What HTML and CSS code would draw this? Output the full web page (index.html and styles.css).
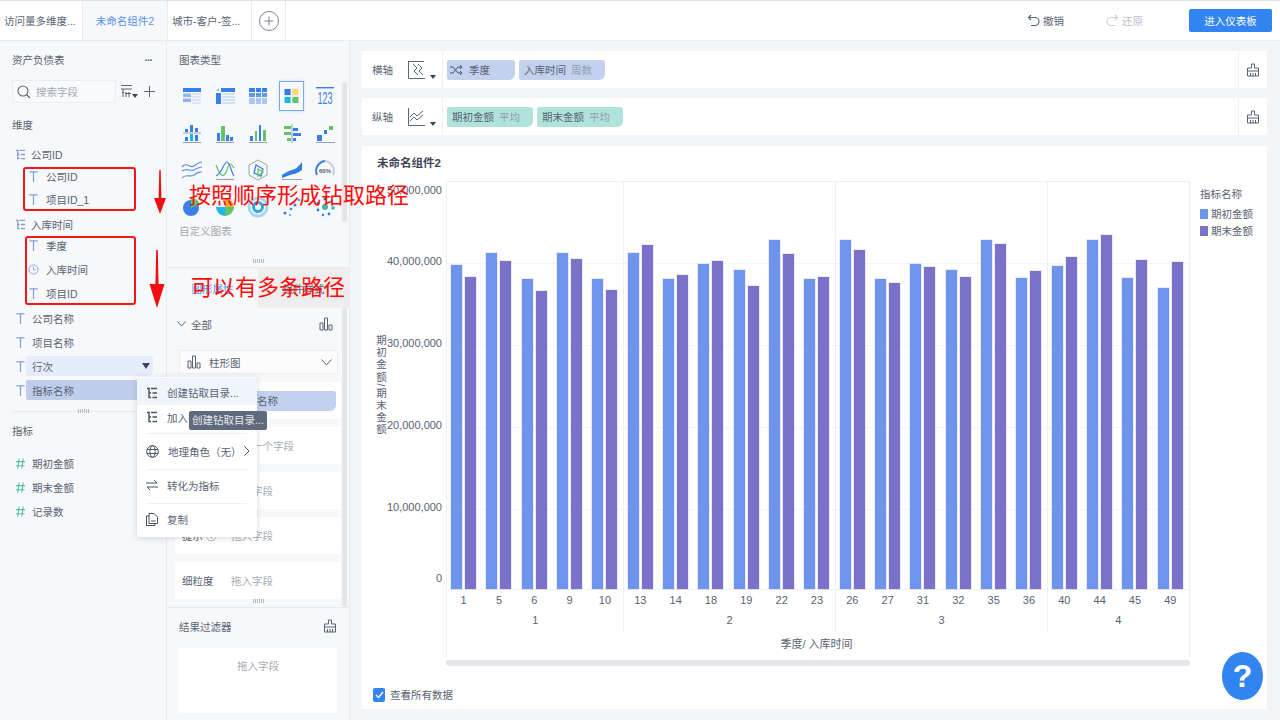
FILE: index.html
```html
<!DOCTYPE html>
<html lang="zh-CN">
<head>
  <meta charset="UTF-8">
  <title>未命名组件2</title>
  <link rel="stylesheet" href="styles.css">
</head>
<body>
<svg class="sprites" width="0" height="0">
  <symbol id="i-t" viewBox="0 0 12 14"><path d="M1.5 2H10.5M6 2V13" fill="none" stroke="currentColor" stroke-width="1.3"/></symbol>
  <symbol id="i-tree" viewBox="0 0 12 12"><path d="M1 1.5H4M3 1.5V10.5H5M3 6H5M5 1.5H11M6.5 6H11M6.5 10.5H11" fill="none" stroke="currentColor" stroke-width="1.4"/></symbol>
  <symbol id="i-hash" viewBox="0 0 12 14"><path d="M4.5 1.5L3 12.5M9 1.5L7.5 12.5M1 5H11M1 9.5H10.5" fill="none" stroke="currentColor" stroke-width="1.2"/></symbol>
  <symbol id="i-brush" viewBox="0 0 14 14"><path d="M5.5 1H8.5V5H12.5V13H1.5V5H5.5ZM1.5 8H12.5M4.5 10V13M7 10V13M9.5 10V13" fill="none" stroke="currentColor" stroke-width="1"/></symbol>
  <symbol id="i-bars" viewBox="0 0 14 14"><path d="M1 6H4V13H1ZM5.5 1H8.5V13H5.5ZM10 8H13V13H10Z" fill="none" stroke="currentColor" stroke-width="1"/></symbol>
</svg>

<div class="app">
  <header class="topbar">
    <nav class="tabs">
      <div class="tab tab-first">访问量多维度...</div>
      <div class="tab tab-active">未命名组件2</div>
      <div class="tab tab-third">城市-客户-签...</div>
      <div class="tab tab-add">
        <svg width="20" height="20" viewBox="0 0 20 20"><circle cx="10" cy="10" r="9.5" fill="none" stroke="#7b8494"/><path d="M10 5.5V14.5M5.5 10H14.5" stroke="#7b8494"/></svg>
      </div>
    </nav>
    <div class="actions">
      <span class="action">
        <svg width="13" height="13" viewBox="0 0 13 13"><path d="M4 1L1.5 3.5L4 6M1.5 3.5H8A3.7 3.7 0 0 1 8 11.5H4" fill="none" stroke="#5b6575" stroke-width="1.1"/></svg>
        撤销
      </span>
      <span class="action action-off">
        <svg width="13" height="13" viewBox="0 0 13 13"><path d="M9 1L11.5 3.5L9 6M11.5 3.5H5A3.7 3.7 0 0 0 5 11.5H9" fill="none" stroke="#ccd0d6" stroke-width="1.1"/></svg>
        还原
      </span>
      <button class="enter-btn">进入仪表板</button>
    </div>
  </header>

  <div class="workspace">
    <aside class="fields">
      <div class="fields-head">
        <span>资产负债表</span>
        <span class="more">···</span>
      </div>
      <div class="search-row">
        <div class="search">
          <svg width="14" height="14" viewBox="0 0 14 14"><circle cx="6" cy="6" r="5" fill="none" stroke="#5b6575" stroke-width="1.1"/><path d="M9.5 9.5L13 13" stroke="#5b6575" stroke-width="1.1"/></svg>
          <span>搜索字段</span>
        </div>
        <svg width="17" height="15" viewBox="0 0 17 15"><path d="M0 1.5H11M0 5H11M1 8.5H3M2 5V13M5 8V13M8 8V13M4 9.5H10" fill="none" stroke="#5b6575"/><path d="M11 10H17L14 14Z" fill="#3d4654"/></svg>
        <svg class="plus" width="11" height="11" viewBox="0 0 11 11"><path d="M5.5 0V11M0 5.5H11" stroke="#5b6575"/></svg>
      </div>

      <h3 class="group-title dim-title">维度</h3>
      <div class="field-list">
        <div class="row"><svg class="ic ic-tree"><use href="#i-tree"/></svg><span class="label">公司ID</span></div>
        <div class="sub sub-first">
          <div class="row row-s"><svg class="ic ic-t"><use href="#i-t"/></svg><span class="label">公司ID</span></div>
          <div class="row row-s"><svg class="ic ic-t"><use href="#i-t"/></svg><span class="label">项目ID_1</span></div>
        </div>
        <div class="row row-next"><svg class="ic ic-tree"><use href="#i-tree"/></svg><span class="label">入库时间</span></div>
        <div class="sub sub-second">
          <div class="row"><svg class="ic ic-t"><use href="#i-t"/></svg><span class="label">季度</span></div>
          <div class="row">
            <svg class="ic ic-t" viewBox="0 0 12 12"><circle cx="6" cy="6" r="5" fill="none" stroke="currentColor"/><path d="M6 3V6.5H8.5" fill="none" stroke="currentColor"/></svg>
            <span class="label">入库时间</span>
          </div>
          <div class="row"><svg class="ic ic-t"><use href="#i-t"/></svg><span class="label">项目ID</span></div>
        </div>
        <div class="row row-next"><svg class="ic ic-t"><use href="#i-t"/></svg><span class="label">公司名称</span></div>
        <div class="row"><svg class="ic ic-t"><use href="#i-t"/></svg><span class="label">项目名称</span></div>
        <div class="row"><svg class="ic ic-t"><use href="#i-t"/></svg><span class="label pill pill-hover">行次<i class="caret"></i></span></div>
        <div class="row"><svg class="ic ic-t"><use href="#i-t"/></svg><span class="label pill pill-on">指标名称</span></div>
      </div>

      <div class="handle-line"><span class="handle"></span></div>

      <h3 class="group-title">指标</h3>
      <div class="field-list measure-list">
        <div class="row"><svg class="ic ic-hash"><use href="#i-hash"/></svg><span class="label">期初金额</span></div>
        <div class="row"><svg class="ic ic-hash"><use href="#i-hash"/></svg><span class="label">期末金额</span></div>
        <div class="row"><svg class="ic ic-hash"><use href="#i-hash"/></svg><span class="label">记录数</span></div>
      </div>
    </aside>

    <section class="config">
      <div class="types">
        <h3 class="group-title">图表类型</h3>
        <div class="type-grid">
          <div class="type"><svg viewBox="0 0 24 24"><rect x="3" y="4" width="18" height="4" fill="#3a7fe8"/><path d="M3 9.5H11V13H3ZM3 14.5H11V18H3Z" fill="#8db5f2"/><path d="M12 10H21M12 13H21M12 16H21M12 19H21" stroke="#bcd3f7"/></svg></div>
          <div class="type"><svg viewBox="0 0 24 24"><rect x="8" y="4" width="14" height="4" fill="#3a7fe8"/><rect x="3" y="9" width="5" height="11" fill="#3a7fe8"/><path d="M3 7L6 4V7Z" fill="#8db5f2"/><path d="M9 10H22M9 13H22M9 16H22M9 19H22" stroke="#a9c8f5"/></svg></div>
          <div class="type"><svg viewBox="0 0 24 24"><path d="M3 4H9V8H3ZM10 4H15V8H10ZM16 4H21V8H16Z" fill="#3a7fe8"/><path d="M3 9H9V13H3ZM10 9H15V13H10ZM16 9H21V13H16Z" fill="#5f97ec"/><path d="M3 14H9V20H3ZM10 14H15V20H10ZM16 14H21V20H16Z" fill="#a9c8f5"/></svg></div>
          <div class="type type-on"><svg viewBox="0 0 24 24"><rect x="4" y="4" width="7" height="7" fill="#2f7de1"/><rect x="13" y="4" width="7" height="7" fill="#f7d774"/><rect x="4" y="13" width="7" height="7" fill="#1eb6e8"/><rect x="13" y="13" width="7" height="7" fill="#62c36a"/></svg></div>
          <div class="type"><svg viewBox="0 0 24 24"><rect x="3" y="3" width="18" height="1.4" fill="#3a7fe8"/><text x="12" y="20" text-anchor="middle" textLength="15" lengthAdjust="spacingAndGlyphs" class="type-num">123</text></svg></div>

          <div class="type"><svg viewBox="0 0 24 24"><path d="M5 8H8V11H5ZM10 4H13V11H10ZM15 7H18V11H15ZM5 16H8V20H5ZM15 14H18V20H15Z" fill="#3a7fe8"/><path d="M10 13H13V20H10Z" fill="#1eb6e8"/><path d="M3 12H21M3 21.5H21" stroke="#9aa3b0"/></svg></div>
          <div class="type"><svg viewBox="0 0 24 24"><path d="M4 12H7V20H4ZM13 14H16V20H13Z" fill="#3a7fe8"/><path d="M8 5H12V20H8Z" fill="#62c36a"/><path d="M17 16H20V20H17Z" fill="#3a7fe8"/><path d="M3 21.5H21" stroke="#9aa3b0"/></svg></div>
          <div class="type"><svg viewBox="0 0 24 24"><path d="M4 15H7V20H4ZM13 8H15V20H13Z" fill="#3a7fe8"/><path d="M9 10H11V20H9ZM17 9H20V20H17Z" fill="#62c36a"/><path d="M13 4H15V20H13Z" fill="#3a7fe8"/><path d="M3 21.5H21" stroke="#9aa3b0"/></svg></div>
          <div class="type"><svg viewBox="0 0 24 24"><path d="M4 5H11V8H4ZM4 11H11V14H4ZM7 17H11V20H7Z" fill="#62c36a"/><path d="M13 7H18V10H13ZM13 12H21V15H13ZM13 17H16V20H13Z" fill="#3a7fe8"/><path d="M12 3V22" stroke="#9aa3b0"/></svg></div>
          <div class="type"><svg viewBox="0 0 24 24"><path d="M4 14H9V20H4ZM11 9H14V13H11Z" fill="#3a7fe8"/><path d="M16 5H20V9H16Z" fill="#62c36a"/><path d="M3 21.5H22" stroke="#9aa3b0"/></svg></div>

          <div class="type"><svg viewBox="0 0 24 24" fill="none" stroke="#5b8fe0" stroke-width="1.2"><path d="M2 9C7 3 10 11 14 8S19 4 22 4M2 13C7 9 10 14 14 12S19 9 22 9M2 20C6 15 10 20 14 17S19 14 22 14"/></svg></div>
          <div class="type"><svg viewBox="0 0 24 24" fill="none" stroke-width="1.2"><path d="M3 7C8 20 11 20 14 12S17 4 21 10" stroke="#62c36a"/><path d="M3 18C9 15 11 4 14 4S18 14 21 18" stroke="#3a7fe8"/><path d="M3 21.5H21" stroke="#9aa3b0"/></svg></div>
          <div class="type"><svg viewBox="0 0 24 24" fill="none"><path d="M12 2L21 7V17L12 22L3 17V7Z" stroke="#9aa3b0"/><path d="M10 7L17 11L15 18L8 15Z" stroke="#3a7fe8" stroke-width="1.3"/><path d="M12 11L17 14L12 18Z" stroke="#62c36a" stroke-width="1.3"/></svg></div>
          <div class="type"><svg viewBox="0 0 24 24"><path d="M2 17C8 13 9 13 12 12S17 11 22 4V12C17 16 13 16 10 17S5 19 2 20Z" fill="#2f7de1"/><path d="M2 21.5H22" stroke="#9aa3b0"/></svg></div>
          <div class="type"><svg viewBox="0 0 24 24" fill="none"><path d="M4 17A10 10 0 0 1 12 3" stroke="#3a7fe8" stroke-width="2"/><path d="M12 3A10 10 0 0 1 20 17" stroke="#c6d2e2" stroke-width="2"/><text x="12" y="15" text-anchor="middle" class="type-gauge">60%</text></svg></div>

          <div class="type"><svg viewBox="0 0 24 24"><circle cx="11" cy="13" r="8" fill="#3a7fe8"/><path d="M11 13V3A10 10 0 0 1 20 9Z" fill="#62c36a"/></svg></div>
          <div class="type"><svg viewBox="0 0 24 24"><path d="M12 12V3A9 9 0 0 1 21 12Z" fill="#f2a93b"/><path d="M12 12H21A9 9 0 0 1 12 21Z" fill="#62c36a"/><path d="M12 12V21A9 9 0 0 1 3 12Z" fill="#1eb6e8"/><path d="M12 12H3A9 9 0 0 1 12 3Z" fill="#e9ecf2"/></svg></div>
          <div class="type"><svg viewBox="0 0 24 24" fill="none"><circle cx="12" cy="12" r="9" stroke="#a6d8f2" stroke-width="3"/><circle cx="12" cy="12" r="4.5" stroke="#2fa8e0" stroke-width="3"/></svg></div>
          <div class="type"><svg viewBox="0 0 24 24" fill="#3a7fe8"><circle cx="5" cy="18" r="1.6"/><circle cx="11" cy="14" r="1.3"/><circle cx="15" cy="10" r="1.6"/><circle cx="19" cy="5" r="1.3" fill="#1eb6e8"/><circle cx="10" cy="20" r="1" fill="#1eb6e8"/></svg></div>
          <div class="type"><svg viewBox="0 0 24 24" fill="#2f7de1"><circle cx="12" cy="4" r="1.6"/><circle cx="18" cy="7" r="1.4" fill="#1eb6e8"/><circle cx="20" cy="13" r="1.8" fill="#3fb6a8"/><circle cx="16" cy="19" r="1.4"/><circle cx="10" cy="20" r="1.2"/><circle cx="5" cy="15" r="1.4"/><circle cx="5" cy="8" r="1.2"/><circle cx="12" cy="12" r="3" fill="#3fb6a8"/></svg></div>
        </div>
        <div class="custom">自定义图表</div>
        <span class="handle handle-types"></span>
        <span class="thumb thumb-types"></span>
      </div>

      <div class="props">
        <div class="prop-tabs">
          <div class="prop-tab prop-tab-on">图形属性</div>
          <div class="prop-tab">组件样式</div>
        </div>
        <div class="all-row">
          <svg width="9" height="6" viewBox="0 0 9 6"><path d="M.5 .5L4.5 5L8.5 .5" fill="none" stroke="#5b6575"/></svg>
          <span>全部</span>
          <svg class="ic-end" width="14" height="14"><use href="#i-bars"/></svg>
        </div>
        <div class="select">
          <svg width="14" height="14"><use href="#i-bars"/></svg>
          <span>柱形图</span>
          <svg class="ic-end" width="11" height="7" viewBox="0 0 11 7"><path d="M.5 .5L5.5 6L10.5 .5" fill="none" stroke="#5b6575"/></svg>
        </div>
        <div class="prop-rows">
          <div class="prop-row"><span class="prop-name">颜色</span><span class="prop-chip">指标名称</span></div>
          <div class="prop-row"><span class="prop-name">大小</span><span class="prop-drop">拖入一个字段</span></div>
          <div class="prop-row"><span class="prop-name">标签</span><span class="prop-drop">拖入字段</span></div>
          <div class="prop-row"><span class="prop-name">提示 ⓘ</span><span class="prop-drop">拖入字段</span></div>
          <div class="prop-row"><span class="prop-name">细粒度</span><span class="prop-drop">拖入字段</span></div>
        </div>
        <span class="handle handle-props"></span>
        <span class="thumb thumb-props"></span>
      </div>

      <div class="result-filter">
        <div class="filter-head">
          <span>结果过滤器</span>
          <svg width="14" height="14"><use href="#i-brush"/></svg>
        </div>
        <div class="filter-drop">拖入字段</div>
      </div>
    </section>

    <main class="stage">
      <div class="shelf">
        <span class="shelf-name">横轴</span>
        <span class="shelf-kind">
          <svg width="17" height="18" viewBox="0 0 17 18" fill="none" stroke="#5b6575"><path d="M.5 0V17.5H17M.5 .5H16"/><path d="M5 3L9 7L6 10L10 14M10 3L14 7L11 10L15 14"/></svg>
          <i class="caret caret-small"></i>
        </span>
        <div class="chips">
          <span class="chip chip-dim chip-q">
            <svg width="12" height="10" viewBox="0 0 12 10" fill="none" stroke="#4a5464"><path d="M0 2H3L8 8H12M0 8H3L8 2H12M10 0L12 2L10 4M10 6L12 8L10 10"/></svg>
            季度
          </span>
          <span class="chip chip-dim">入库时间<em>周数</em></span>
        </div>
        <span class="shelf-end"><svg width="14" height="14"><use href="#i-brush"/></svg></span>
      </div>
      <div class="shelf">
        <span class="shelf-name">纵轴</span>
        <span class="shelf-kind">
          <svg width="17" height="18" viewBox="0 0 17 18" fill="none" stroke="#5b6575"><path d="M.5 0V17.5H17"/><path d="M2 9L6 5L9 8L15 3M2 13L6 9L9 12L15 7"/></svg>
          <i class="caret caret-small"></i>
        </span>
        <div class="chips">
          <span class="chip chip-mea">期初金额<em>平均</em></span>
          <span class="chip chip-mea">期末金额<em>平均</em></span>
        </div>
        <span class="shelf-end"><svg width="14" height="14"><use href="#i-brush"/></svg></span>
      </div>

      <div class="chart-card">
        <h2 class="chart-title">未命名组件2</h2>
        <div class="chart-body">
          <div class="y-title">期初金额/期末金额</div>
          <div class="y-ticks">
            <span class="tick">50,000,000</span>
            <span class="tick tick-edge">40,000,000</span>
            <span class="tick">30,000,000</span>
            <span class="tick">20,000,000</span>
            <span class="tick">10,000,000</span>
            <span class="tick tick-edge">0</span>
          </div>
          <div class="plot-wrap">
            <div class="plot">
              <div class="quarters">
                <div class="quarter q5">
                  <div class="bars">
                    <div class="pair"><i class="bar a" style="height:324px"></i><i class="bar b" style="height:312px"></i></div>
                    <div class="pair"><i class="bar a" style="height:336px"></i><i class="bar b" style="height:328px"></i></div>
                    <div class="pair"><i class="bar a" style="height:310px"></i><i class="bar b" style="height:298px"></i></div>
                    <div class="pair"><i class="bar a" style="height:336px"></i><i class="bar b" style="height:330px"></i></div>
                    <div class="pair"><i class="bar a" style="height:310px"></i><i class="bar b" style="height:299px"></i></div>
                  </div>
                  <div class="weeks"><span>1</span><span>5</span><span>6</span><span>9</span><span>10</span></div>
                  <div class="q-name">1</div>
                </div>
                <div class="quarter q6">
                  <div class="bars">
                    <div class="pair"><i class="bar a" style="height:336px"></i><i class="bar b" style="height:344px"></i></div>
                    <div class="pair"><i class="bar a" style="height:310px"></i><i class="bar b" style="height:314px"></i></div>
                    <div class="pair"><i class="bar a" style="height:325px"></i><i class="bar b" style="height:328px"></i></div>
                    <div class="pair"><i class="bar a" style="height:319px"></i><i class="bar b" style="height:303px"></i></div>
                    <div class="pair"><i class="bar a" style="height:349px"></i><i class="bar b" style="height:335px"></i></div>
                    <div class="pair"><i class="bar a" style="height:310px"></i><i class="bar b" style="height:312px"></i></div>
                  </div>
                  <div class="weeks"><span>13</span><span>14</span><span>18</span><span>19</span><span>22</span><span>23</span></div>
                  <div class="q-name">2</div>
                </div>
                <div class="quarter q6">
                  <div class="bars">
                    <div class="pair"><i class="bar a" style="height:349px"></i><i class="bar b" style="height:339px"></i></div>
                    <div class="pair"><i class="bar a" style="height:310px"></i><i class="bar b" style="height:306px"></i></div>
                    <div class="pair"><i class="bar a" style="height:325px"></i><i class="bar b" style="height:322px"></i></div>
                    <div class="pair"><i class="bar a" style="height:319px"></i><i class="bar b" style="height:312px"></i></div>
                    <div class="pair"><i class="bar a" style="height:349px"></i><i class="bar b" style="height:345px"></i></div>
                    <div class="pair"><i class="bar a" style="height:311px"></i><i class="bar b" style="height:318px"></i></div>
                  </div>
                  <div class="weeks"><span>26</span><span>27</span><span>31</span><span>32</span><span>35</span><span>36</span></div>
                  <div class="q-name">3</div>
                </div>
                <div class="quarter q4">
                  <div class="bars">
                    <div class="pair"><i class="bar a" style="height:323px"></i><i class="bar b" style="height:332px"></i></div>
                    <div class="pair"><i class="bar a" style="height:349px"></i><i class="bar b" style="height:354px"></i></div>
                    <div class="pair"><i class="bar a" style="height:311px"></i><i class="bar b" style="height:329px"></i></div>
                    <div class="pair"><i class="bar a" style="height:301px"></i><i class="bar b" style="height:327px"></i></div>
                  </div>
                  <div class="weeks"><span>40</span><span>44</span><span>45</span><span>49</span></div>
                  <div class="q-name">4</div>
                </div>
              </div>
              <div class="x-title">季度/ 入库时间</div>
            </div>
            <div class="h-scroll"></div>
          </div>
          <div class="legend">
            <div class="legend-title">指标名称</div>
            <div class="legend-item"><i class="swatch a"></i>期初金额</div>
            <div class="legend-item"><i class="swatch b"></i>期末金额</div>
          </div>
        </div>
        <label class="see-all">
          <span class="check"><svg width="9" height="8" viewBox="0 0 9 8"><path d="M1 4L3.5 6.5L8 1" fill="none" stroke="#fff" stroke-width="1.4"/></svg></span>
          查看所有数据
        </label>
      </div>
    </main>
  </div>

  <!-- context menu for the field -->
  <div class="menu">
    <div class="menu-item menu-item-on">
      <svg width="12" height="12"><use href="#i-tree"/></svg><span>创建钻取目录...</span>
    </div>
    <div class="menu-item menu-item-short">
      <svg width="12" height="12"><use href="#i-tree"/></svg><span>加入钻取目录</span>
    </div>
    <div class="menu-sep menu-sep-first"></div>
    <div class="menu-item">
      <svg width="13" height="13" viewBox="0 0 13 13" fill="none" stroke="currentColor"><circle cx="6.5" cy="6.5" r="5.8"/><ellipse cx="6.5" cy="6.5" rx="2.6" ry="5.8"/><path d="M1 4.5H12M1 8.5H12"/></svg>
      <span>地理角色（无）</span>
      <svg class="ic-end" width="6" height="10" viewBox="0 0 6 10"><path d="M.5 .5L5 5L.5 9.5" fill="none" stroke="currentColor"/></svg>
    </div>
    <div class="menu-sep"></div>
    <div class="menu-item">
      <svg width="12" height="12" viewBox="0 0 12 12" fill="none" stroke="currentColor"><path d="M0 4H11L8 1M12 8H1L4 11"/></svg>
      <span>转化为指标</span>
    </div>
    <div class="menu-sep"></div>
    <div class="menu-item">
      <svg width="12" height="13" viewBox="0 0 12 13" fill="none" stroke="currentColor"><path d="M3 .5H8L11.5 4V10.5H3ZM3 3H.5V12.5H9V10.5M5 8H9.5"/></svg>
      <span>复制</span>
    </div>
  </div>
  <div class="tooltip">创建钻取目录...</div>

  <!-- annotations drawn on top of the screenshot -->
  <span class="mark mark-a"></span>
  <span class="mark mark-b"></span>
  <svg class="arrow arrow-a" width="14" height="44" viewBox="0 0 14 44"><path d="M6.3 0H7.7L8.4 28H13L7 44L1 28H5.6Z" fill="#f01010"/></svg>
  <svg class="arrow arrow-b" width="16" height="58" viewBox="0 0 16 58"><path d="M7.2 0H8.8L9.6 34H15.5L8 58L.5 34H6.4Z" fill="#f01010"/></svg>
  <div class="note note-a">按照顺序形成钻取路径</div>
  <div class="note note-b">可以有多条路径</div>

  <button class="help">?</button>
</div>
</body>
</html>
```

FILE: styles.css
```css
:root {
  --text: #596373;
  --muted: #a4abb6;
  --line: #e9ebef;
  --panel: #f7f8fa;
  --blue: #3285f0;
  --bar-a: #6f94ec;
  --bar-b: #7a72c8;
}

* {
  box-sizing: border-box;
}

html, body {
  margin: 0;
  height: 100%;
  overflow: hidden;
}

body {
  font-family: "Liberation Sans", "Noto Sans CJK SC", sans-serif;
  font-size: 10.5px;
  color: var(--text);
  background: #fff;
}

.sprites {
  position: absolute;
}

h2, h3 {
  margin: 0;
  font-size: inherit;
  font-weight: normal;
}

.app {
  position: relative;
  display: flex;
  flex-direction: column;
  width: 1280px;
  height: 720px;
}

/* top bar */
.topbar {
  display: flex;
  justify-content: space-between;
  height: 41px;
  border-top: 1px solid #e2e2e2;
  border-bottom: 1px solid var(--line);
  flex: none;
}

.tabs {
  display: flex;
}

.tab {
  display: flex;
  align-items: center;
  border-right: 1px solid var(--line);
  white-space: nowrap;
}

.tab-first {
  width: 83px;
  padding-left: 4px;
}

.tab-active {
  width: 85px;
  justify-content: center;
  color: #5b92e8;
  background: var(--panel);
}

.tab-third {
  width: 84px;
  padding-left: 4px;
}

.tab-add {
  width: 34px;
  justify-content: center;
}

.actions {
  display: flex;
  align-items: center;
  padding-right: 8px;
}

.action {
  display: flex;
  align-items: center;
  gap: 3px;
  margin-right: 42px;
}

.action-off {
  margin-right: 46px;
  color: #b9bec6;
}

.enter-btn {
  width: 83px;
  height: 23px;
  padding: 0;
  border: none;
  border-radius: 2px;
  background: var(--blue);
  color: #fff;
  font: inherit;
}

.workspace {
  display: flex;
  flex: 1;
  min-height: 0;
}

/* field list */
.fields {
  width: 167px;
  flex: none;
  padding: 11px 0 0 12px;
  background: var(--panel);
  border-right: 1px solid var(--line);
}

.fields-head {
  display: flex;
  justify-content: space-between;
  height: 16px;
  line-height: 16px;
  padding-right: 14px;
}

.more {
  font-weight: bold;
  letter-spacing: -1px;
}

.search-row {
  display: flex;
  align-items: center;
  margin-top: 12px;
}

.search {
  display: flex;
  align-items: center;
  gap: 5px;
  width: 104px;
  height: 23px;
  margin-right: 5px;
  padding-left: 4px;
  border: 1px solid #eceef1;
  color: var(--muted);
  background: #f9fafb;
}

.plus {
  margin-left: 6px;
}

.group-title {
  height: 16px;
  line-height: 16px;
}

.dim-title {
  margin-top: 14px;
}

.field-list {
  margin: 9px 0 0 -12px;
}

.row {
  display: flex;
  align-items: center;
  height: 24px;
  padding-left: 15px;
}

.row-s {
  height: 23px;
}

.row-next {
  margin-top: 1px;
}

.sub .row {
  padding-left: 28px;
}

.sub-first {
  margin-top: -1px;
}

.sub-second {
  margin-top: -3px;
}

.ic {
  flex: none;
  width: 11px;
  height: 13px;
}

.ic-t {
  color: #7f9fe0;
}

.ic-tree {
  color: #8a9bc9;
}

.ic-hash {
  color: #57bdb0;
}

.row .label {
  margin-left: 6px;
}

.row .ic-tree + .label {
  margin-left: 5px;
}

.sub .row .label {
  margin-left: 7px;
}

.row .pill {
  position: relative;
  display: flex;
  align-items: center;
  width: 127px;
  height: 20px;
  margin-left: 0;
  padding-left: 6px;
  border-radius: 2px 3px 6px 2px;
}

.pill-hover {
  background: #e5edfa;
}

.pill-on {
  background: #bfcfeb;
}

.caret {
  position: absolute;
  right: 3px;
  top: 7px;
  border-left: 4px solid transparent;
  border-right: 4px solid transparent;
  border-top: 6px solid #3d4654;
}

.handle-line {
  position: relative;
  height: 1px;
  margin: 9px 1px 0 0;
  background: var(--line);
}

.handle {
  position: absolute;
  width: 11px;
  height: 4px;
  background: repeating-linear-gradient(90deg, #b4bac4 0 1px, transparent 1px 2px);
}

.handle-line .handle {
  left: 66px;
  top: -2px;
}

.handle-line + .group-title {
  margin-top: 11px;
}

.measure-list {
  margin-top: 12px;
}

/* middle panel */
.config {
  display: flex;
  flex-direction: column;
  width: 183px;
  flex: none;
  background: var(--panel);
  border-right: 1px solid var(--line);
}

.types {
  position: relative;
  height: 227px;
  flex: none;
  padding: 11px 0 0 12px;
  border-bottom: 1px solid var(--line);
}

.type-grid {
  display: grid;
  grid-template-columns: repeat(5, 33.3px);
  grid-auto-rows: 37px;
  margin: 9px 0 0 -4px;
}

.type {
  display: flex;
  align-items: center;
  justify-content: center;
  height: 37px;
}

.type svg {
  width: 24px;
  height: 24px;
  overflow: visible;
}

.type-on svg {
  width: 25px;
  height: 30px;
  padding: 3px 1px;
  border: 1px solid #79a8ee;
  box-shadow: 0 0 3px #cfdff7;
}

.type-num {
  font-size: 17px;
  fill: #3a7fe8;
}

.type-gauge {
  font-size: 6px;
  font-weight: bold;
  fill: #5b6575;
}

.custom {
  margin-top: -2px;
  color: var(--muted);
  line-height: 16px;
}

.handle-types {
  left: 86px;
  bottom: 4px;
}

.thumb {
  position: absolute;
  right: 2px;
  width: 5px;
  border-radius: 3px;
  background: #e4e6ea;
}

.thumb-types {
  top: 41px;
  height: 140px;
}

.props {
  position: relative;
  flex: 1;
  min-height: 0;
  overflow: hidden;
  border-bottom: 1px solid var(--line);
}

.prop-tabs {
  display: flex;
  height: 40px;
}

.prop-tab {
  display: flex;
  align-items: center;
  justify-content: center;
  width: 92px;
  background: #eeeeee;
}

.prop-tab-on {
  color: #5b92e8;
  background: transparent;
}

.all-row {
  display: flex;
  align-items: center;
  gap: 5px;
  height: 32px;
  padding: 0 16px 0 10px;
}

.ic-end {
  margin-left: auto;
}

.select {
  display: flex;
  align-items: center;
  gap: 8px;
  height: 24px;
  margin: 10px 11px 0 12px;
  padding: 0 5px 0 7px;
  border: 1px solid #eceef1;
  background: #fcfcfd;
}

.prop-rows {
  display: flex;
  flex-direction: column;
  gap: 8px;
  margin: 8px 8px 0;
}

.prop-row {
  display: flex;
  align-items: center;
  flex: none;
  height: 37px;
  padding-left: 7px;
  background: #fff;
}

.prop-name {
  width: 49px;
  flex: none;
}

.prop-drop {
  color: var(--muted);
}

.prop-chip {
  width: 111px;
  height: 20px;
  margin-left: -6px;
  padding-left: 11px;
  line-height: 20px;
  border-radius: 2px 3px 6px 2px;
  background: #c2d1ee;
}

.handle-props {
  left: 86px;
  bottom: 4px;
}

.thumb-props {
  top: 40px;
  bottom: 0;
}

.result-filter {
  height: 112px;
  flex: none;
  padding: 10px 12px 0;
}

.filter-head {
  display: flex;
  justify-content: space-between;
  align-items: center;
  height: 16px;
}

.filter-drop {
  height: 65px;
  margin-top: 14px;
  padding-top: 10px;
  text-align: center;
  color: var(--muted);
  background: #fff;
}

/* right stage */
.stage {
  display: flex;
  flex-direction: column;
  flex: 1;
  min-width: 0;
  padding: 10px 13px 11px 12px;
  background: #f4f5f7;
}

.shelf {
  display: flex;
  align-items: center;
  height: 37px;
  flex: none;
  margin-bottom: 10px;
  padding-left: 10px;
  background: #fff;
}

.shelf-name {
  width: 36px;
}

.shelf-kind {
  position: relative;
  display: flex;
  width: 35px;
  height: 100%;
  align-items: center;
  border-right: 1px solid #f0f1f3;
}

.caret-small {
  right: 6px;
  top: 24px;
  border-left-width: 3px;
  border-right-width: 3px;
  border-top-width: 4px;
}

.chips {
  display: flex;
  gap: 4px;
  margin-left: 4px;
}

.chip {
  display: flex;
  align-items: center;
  height: 20px;
  padding: 0 13px 0 5px;
  border-radius: 2px 3px 6px 2px;
}

.chip em {
  margin-left: 5px;
  font-style: normal;
  color: #949cab;
}

.chip-dim {
  background: #c3d1ef;
}

.chip-q {
  width: 68px;
  gap: 7px;
  padding-left: 3px;
}

.chip-mea {
  background: #afe3dc;
}

.shelf-end {
  display: flex;
  align-items: center;
  justify-content: center;
  width: 29px;
  height: 100%;
  margin-left: auto;
  border-left: 1px solid #f0f1f3;
}

.chart-card {
  flex: 1;
  min-height: 0;
  margin-top: 1px;
  padding-left: 12px;
  background: #fff;
}

.chart-title {
  height: 35px;
  padding: 8px 0 0 3px;
  line-height: 18px;
  font-size: 11.5px;
  font-weight: bold;
  color: #3d4654;
}

.chart-body {
  display: flex;
}

.y-title {
  width: 14px;
  height: 409px;
  display: flex;
  align-items: center;
  writing-mode: vertical-rl;
  justify-content: center;
  line-height: 14px;
  letter-spacing: 1.6px;
}

.y-ticks {
  display: flex;
  flex-direction: column;
  align-items: flex-end;
  width: 54px;
  height: 409px;
  padding-top: 2px;
  margin-right: 4px;
}

.tick {
  height: 14px;
  line-height: 14px;
  font-size: 11px;
  margin-top: 68px;
  white-space: nowrap;
}

.tick:first-child {
  margin-top: 0;
}

.tick-edge {
  margin-top: 57px;
}

.plot-wrap {
  width: 744px;
  flex: none;
}

.plot {
  height: 476px;
  border: 1px solid #eef0f2;
  border-bottom: none;
}

.quarters {
  display: flex;
  height: 450px;
}

.quarter {
  display: flex;
  flex-direction: column;
  min-width: 0;
}

.quarter + .quarter {
  box-shadow: -1px 0 0 #eef0f2;
}

.q4 { flex: 4 4 0; }
.q5 { flex: 5 5 0; }
.q6 { flex: 6 6 0; }

.bars {
  display: flex;
  height: 408px;
  border-bottom: 1px solid #f1f2f4;
  background-image: linear-gradient(#f5f6f7 1px, transparent 1px);
  background-size: 100% 82px;
  background-position: 0 -1px;
}

.pair {
  display: flex;
  flex: 1 1 0;
  align-items: flex-end;
  justify-content: center;
  gap: 3px;
  padding-right: 2px;
}

.bar {
  display: block;
  width: 11px;
  box-shadow: 0 0 0 1px rgba(140, 140, 235, .18);
}

.a {
  background: var(--bar-a);
}

.b {
  background: var(--bar-b);
}

.weeks {
  display: flex;
  height: 20px;
  align-items: center;
  font-size: 11px;
}

.weeks span {
  flex: 1 1 0;
  text-align: center;
  padding-right: 2px;
}

.q-name {
  height: 22px;
  line-height: 20px;
  text-align: center;
  font-size: 11px;
}

.x-title {
  margin-top: 4px;
  padding-right: 3px;
  text-align: center;
  line-height: 16px;
  font-size: 11px;
}

.h-scroll {
  height: 6px;
  margin-top: 3px;
  border-radius: 3px;
  background: #e5e6ea;
}

.legend {
  margin-left: 10px;
  padding-top: 5px;
}

.legend-title {
  line-height: 16px;
  margin-bottom: 3px;
}

.legend-item {
  display: flex;
  align-items: center;
  gap: 3px;
  height: 17px;
}

.swatch {
  width: 8px;
  height: 10px;
}

.see-all {
  display: flex;
  align-items: center;
  gap: 5px;
  margin: 21px 0 0 -1px;
}

.check {
  display: flex;
  align-items: center;
  justify-content: center;
  width: 12px;
  height: 14px;
  border-radius: 2px;
  background: var(--blue);
}

/* popups */
.menu {
  position: absolute;
  left: 137px;
  top: 377px;
  width: 120px;
  height: 160px;
  padding-top: 1px;
  background: #fff;
  border-radius: 2px;
  box-shadow: 0 1px 6px rgba(80, 90, 110, .22);
}

.menu-item {
  display: flex;
  align-items: center;
  gap: 9px;
  height: 28px;
  padding: 0 7px 0 9px;
}

.menu-item svg {
  flex: none;
  color: #4a5464;
}

.menu-item span {
  flex: 1;
  min-width: 0;
  white-space: nowrap;
}

.menu-item-on {
  height: 27px;
  padding-top: 2px;
  background: #f0f4fb;
}

.menu-item-short {
  height: 24px;
}

.menu-sep {
  height: 1px;
  margin: 4px 10px 1px;
  background: #f0f1f3;
}

.menu-sep-first {
  margin-bottom: 3px;
}

.tooltip {
  position: absolute;
  left: 189px;
  top: 411px;
  width: 78px;
  height: 19px;
  line-height: 19px;
  text-align: center;
  color: #e8eaee;
  border-radius: 2px;
  background: #5f6b7c;
}

/* red notes */
.mark {
  position: absolute;
  border: 2px solid #f01818;
  border-radius: 3px;
}

.mark-a {
  left: 23px;
  top: 167px;
  width: 113px;
  height: 44px;
}

.mark-b {
  left: 25px;
  top: 236px;
  width: 111px;
  height: 69px;
}

.arrow {
  position: absolute;
}

.arrow-a {
  left: 153px;
  top: 170px;
}

.arrow-b {
  left: 149px;
  top: 250px;
}

.note {
  position: absolute;
  font-size: 22px;
  line-height: 30px;
  color: #ff0b0b;
  white-space: nowrap;
}

.note-a {
  left: 189px;
  top: 181px;
}

.note-b {
  left: 191px;
  top: 273px;
}

.help {
  position: absolute;
  left: 1222px;
  top: 652px;
  width: 41px;
  height: 48px;
  padding: 0;
  border: none;
  border-radius: 50%;
  color: #fff;
  background: var(--blue);
  font: bold 32px "Liberation Sans", sans-serif;
}
```
